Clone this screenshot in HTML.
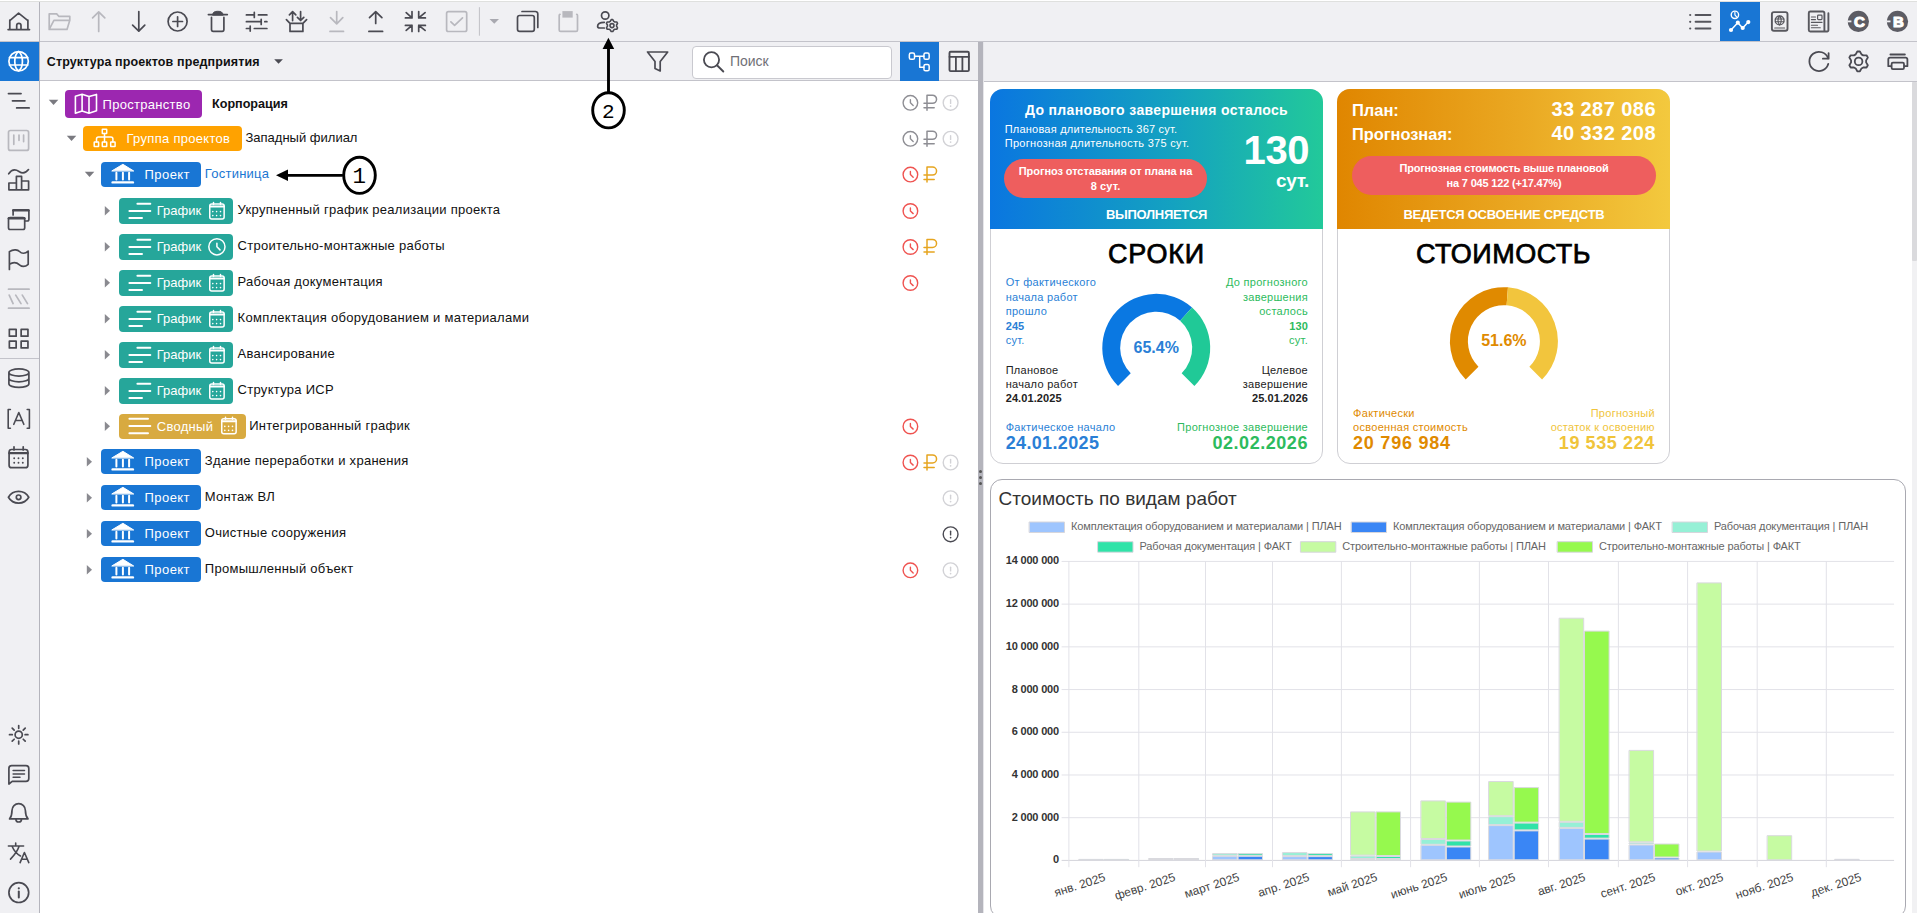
<!DOCTYPE html>
<html><head><meta charset="utf-8"><title>UI</title><style>
html,body{margin:0;padding:0;width:1917px;height:915px;overflow:hidden;background:#fff;font-family:"Liberation Sans",sans-serif;}
.a{position:absolute;display:block}
.t{position:absolute;white-space:nowrap;line-height:1}
.bar{position:absolute;background:#f0f0f3}
.badge{position:absolute;border-radius:4px;color:#fff;font-size:13px}
.bt{position:absolute;white-space:nowrap;line-height:1;top:50%;transform:translateY(-50%)}
</style></head><body>
<div class="a" style="left:0;top:1px;width:1917px;height:1px;background:#dfe0de"></div>
<div class="bar" style="left:0;top:2px;width:1917px;height:39px"></div>
<div class="a" style="left:40px;top:41px;width:1877px;height:1px;background:#c3c3ca"></div>
<div class="bar" style="left:0;top:2px;width:39px;height:911px"></div>
<div class="a" style="left:39px;top:2px;width:1px;height:911px;background:#b4b4bc"></div>
<div class="a" style="left:0;top:42px;width:39px;height:39px;background:#1976d4"></div>
<div class="a" style="left:0;top:41px;width:39px;height:1px;background:#c3c3ca"></div>
<div class="a" style="left:0;top:358px;width:39px;height:1px;background:#c3c3ca"></div>
<div class="bar" style="left:40px;top:42px;width:938px;height:38px"></div>
<div class="a" style="left:40px;top:80px;width:938px;height:1px;background:#c3c3ca"></div>
<div class="bar" style="left:984px;top:42px;width:933px;height:39px"></div>
<div class="a" style="left:984px;top:81px;width:933px;height:1px;background:#c3c3ca"></div>
<div class="a" style="left:978px;top:42px;width:5px;height:871px;background:#b4b4bc"></div>
<div class="a" style="left:983px;top:42px;width:1px;height:871px;background:#e6e6ea"></div>
<div class="a" style="left:979px;top:470px;width:3px;height:3px;border-radius:50%;background:#555"></div>
<div class="a" style="left:979px;top:476px;width:3px;height:3px;border-radius:50%;background:#555"></div>
<div class="a" style="left:979px;top:482px;width:3px;height:3px;border-radius:50%;background:#555"></div>
<div class="a" style="left:1912px;top:82px;width:5px;height:831px;background:#f1f1f3"></div>
<div class="a" style="left:1912px;top:82px;width:5px;height:179px;background:#dadadd;border-radius:1px"></div>
<div class="a" style="left:692px;top:45.5px;width:198px;height:31px;border:1px solid #c9c9cf;border-radius:4px;background:#fff"></div>
<div class="t" style="left:40px;top:0;"></div>
<div class="badge" style="left:65px;top:90px;width:137px;height:28px;background:#9c27b0"></div>
<div class="t" style="left:102.5px;top:97.5px;font-size:13px;letter-spacing:0.3px;color:#fff">Пространство</div>
<div class="t" style="left:212px;top:98px;font-size:12.6px;font-weight:bold;color:#111">Корпорация</div>
<div class="badge" style="left:83px;top:126px;width:159px;height:25px;background:#ffa200"></div>
<div class="t" style="left:126.5px;top:131.5px;font-size:13px;letter-spacing:0.3px;color:#fff">Группа проектов</div>
<div class="t" style="left:245.5px;top:130.5px;font-size:13px;color:#111">Западный филиал</div>
<div class="badge" style="left:101px;top:162px;width:100px;height:25px;background:#1976d4"></div>
<div class="t" style="left:144.5px;top:168px;font-size:13px;letter-spacing:0.45px;color:#fff">Проект</div>
<div class="t" style="left:204.8px;top:166.5px;font-size:13px;letter-spacing:0.25px;color:#1976d2">Гостиница</div>
<div class="badge" style="left:119px;top:198px;width:114px;height:26px;background:#26a69a"></div>
<div class="t" style="left:156.7px;top:203.6px;font-size:13px;color:#fff">График</div>
<div class="t" style="left:237.6px;top:203px;font-size:13px;letter-spacing:0.28px;color:#111">Укрупненный график реализации проекта</div>
<div class="badge" style="left:119px;top:234px;width:114px;height:26px;background:#26a69a"></div>
<div class="t" style="left:156.7px;top:239.6px;font-size:13px;color:#fff">График</div>
<div class="t" style="left:237.6px;top:239px;font-size:13px;letter-spacing:0.28px;color:#111">Строительно-монтажные работы</div>
<div class="badge" style="left:119px;top:270px;width:114px;height:26px;background:#26a69a"></div>
<div class="t" style="left:156.7px;top:275.6px;font-size:13px;color:#fff">График</div>
<div class="t" style="left:237.6px;top:275px;font-size:13px;letter-spacing:0.28px;color:#111">Рабочая документация</div>
<div class="badge" style="left:119px;top:306px;width:114px;height:26px;background:#26a69a"></div>
<div class="t" style="left:156.7px;top:311.6px;font-size:13px;color:#fff">График</div>
<div class="t" style="left:237.6px;top:311px;font-size:13px;letter-spacing:0.28px;color:#111">Комплектация оборудованием и материалами</div>
<div class="badge" style="left:119px;top:342px;width:114px;height:26px;background:#26a69a"></div>
<div class="t" style="left:156.7px;top:347.6px;font-size:13px;color:#fff">График</div>
<div class="t" style="left:237.6px;top:347px;font-size:13px;letter-spacing:0.28px;color:#111">Авансирование</div>
<div class="badge" style="left:119px;top:378px;width:114px;height:26px;background:#26a69a"></div>
<div class="t" style="left:156.7px;top:383.6px;font-size:13px;color:#fff">График</div>
<div class="t" style="left:237.6px;top:383px;font-size:13px;letter-spacing:0.28px;color:#111">Структура ИСР</div>
<div class="badge" style="left:119px;top:414px;width:127px;height:25px;background:#d8aa40"></div>
<div class="t" style="left:156.7px;top:420px;font-size:13px;letter-spacing:0.3px;color:#fff">Сводный</div>
<div class="t" style="left:249.2px;top:419px;font-size:13px;letter-spacing:0.28px;color:#111">Интегрированный график</div>
<div class="badge" style="left:101px;top:449px;width:100px;height:25px;background:#1976d4"></div>
<div class="t" style="left:144.5px;top:454.5px;font-size:13px;letter-spacing:0.45px;color:#fff">Проект</div>
<div class="t" style="left:204.8px;top:453.8px;font-size:13px;letter-spacing:0.28px;color:#111">Здание переработки и хранения</div>
<div class="badge" style="left:101px;top:485px;width:100px;height:25px;background:#1976d4"></div>
<div class="t" style="left:144.5px;top:490.5px;font-size:13px;letter-spacing:0.45px;color:#fff">Проект</div>
<div class="t" style="left:204.8px;top:489.8px;font-size:13px;letter-spacing:0.28px;color:#111">Монтаж ВЛ</div>
<div class="badge" style="left:101px;top:521px;width:100px;height:25px;background:#1976d4"></div>
<div class="t" style="left:144.5px;top:526.5px;font-size:13px;letter-spacing:0.45px;color:#fff">Проект</div>
<div class="t" style="left:204.8px;top:525.8px;font-size:13px;letter-spacing:0.28px;color:#111">Очистные сооружения</div>
<div class="badge" style="left:101px;top:557px;width:100px;height:25px;background:#1976d4"></div>
<div class="t" style="left:144.5px;top:562.5px;font-size:13px;letter-spacing:0.45px;color:#fff">Проект</div>
<div class="t" style="left:204.8px;top:561.8px;font-size:13px;letter-spacing:0.28px;color:#111">Промышленный объект</div>
<div class="a" style="left:990px;top:89px;width:331px;height:373px;border:1px solid #cfcfd4;border-radius:13px;background:#fff"></div>
<div class="a" style="left:990px;top:89px;width:333px;height:140px;border-radius:13px 13px 0 0;background:linear-gradient(90deg,#0a76e0 0%,#14a2c0 55%,#22c99a 100%)"></div>
<div class="t" style="left:1156.50px;top:103.35px;font-size:14px;color:#fff;font-weight:bold;transform:translateX(-50%);letter-spacing:0.35px">До планового завершения осталось</div>
<div class="t" style="left:1004.70px;top:123.99px;font-size:11px;color:#fff;letter-spacing:0.22px">Плановая длительность 367 сут.</div>
<div class="t" style="left:1004.70px;top:138.19px;font-size:11px;color:#fff;letter-spacing:0.3px">Прогнозная длительность 375 сут.</div>
<div class="a" style="left:1004px;top:159px;width:203px;height:39px;border-radius:19.5px;background:#ee5e5e"></div>
<div class="t" style="left:1105.50px;top:166.39px;font-size:11px;color:#fff;font-weight:bold;transform:translateX(-50%);letter-spacing:-0.08px">Прогноз отставания от плана на</div>
<div class="t" style="left:1105.50px;top:181.19px;font-size:11px;color:#fff;font-weight:bold;transform:translateX(-50%);letter-spacing:0.1px">8 сут.</div>
<div class="t" style="left:1309.30px;top:130.04px;font-size:40px;color:#fff;transform:translateX(-100%);font-weight:bold;letter-spacing:-0.3px">130</div>
<div class="t" style="left:1308.80px;top:170.52px;font-size:19px;color:#fff;font-weight:bold;transform:translateX(-100%);letter-spacing:-0.4px">сут.</div>
<div class="t" style="left:1156.50px;top:208.30px;font-size:13px;color:#fff;font-weight:bold;transform:translateX(-50%);letter-spacing:-0.3px">ВЫПОЛНЯЕТСЯ</div>
<div class="t" style="left:1156.50px;top:240.74px;font-size:27px;color:#000;transform:translateX(-50%);letter-spacing:0.75px;-webkit-text-stroke:0.75px #000">СРОКИ</div>
<div class="t" style="left:1005.70px;top:277.29px;font-size:11px;color:#2a7fd6;letter-spacing:0.28px">От фактического</div>
<div class="t" style="left:1308.00px;top:277.29px;font-size:11px;color:#2dbb5d;transform:translateX(-100%);letter-spacing:0.28px">До прогнозного</div>
<div class="t" style="left:1005.70px;top:291.79px;font-size:11px;color:#2a7fd6;letter-spacing:0.28px">начала работ</div>
<div class="t" style="left:1308.00px;top:291.79px;font-size:11px;color:#2dbb5d;transform:translateX(-100%);letter-spacing:0.28px">завершения</div>
<div class="t" style="left:1005.70px;top:306.29px;font-size:11px;color:#2a7fd6;letter-spacing:0.28px">прошло</div>
<div class="t" style="left:1308.00px;top:306.29px;font-size:11px;color:#2dbb5d;transform:translateX(-100%);letter-spacing:0.28px">осталось</div>
<div class="t" style="left:1005.70px;top:320.79px;font-size:11px;color:#2a7fd6;font-weight:bold;letter-spacing:0.1px">245</div>
<div class="t" style="left:1308.00px;top:320.79px;font-size:11px;color:#2dbb5d;font-weight:bold;transform:translateX(-100%);letter-spacing:0.1px">130</div>
<div class="t" style="left:1005.70px;top:335.29px;font-size:11px;color:#2a7fd6;letter-spacing:0.28px">сут.</div>
<div class="t" style="left:1308.00px;top:335.29px;font-size:11px;color:#2dbb5d;transform:translateX(-100%);letter-spacing:0.28px">сут.</div>
<div class="t" style="left:1005.70px;top:364.99px;font-size:11px;color:#222;letter-spacing:0.28px">Плановое</div>
<div class="t" style="left:1005.70px;top:378.89px;font-size:11px;color:#222;letter-spacing:0.28px">начало работ</div>
<div class="t" style="left:1005.70px;top:392.59px;font-size:11px;color:#222;font-weight:bold;letter-spacing:0.1px">24.01.2025</div>
<div class="t" style="left:1308.00px;top:364.99px;font-size:11px;color:#222;transform:translateX(-100%);letter-spacing:0.28px">Целевое</div>
<div class="t" style="left:1308.00px;top:378.89px;font-size:11px;color:#222;transform:translateX(-100%);letter-spacing:0.28px">завершение</div>
<div class="t" style="left:1308.00px;top:392.59px;font-size:11px;color:#222;font-weight:bold;transform:translateX(-100%);letter-spacing:0.1px">25.01.2026</div>
<div class="t" style="left:1005.70px;top:421.99px;font-size:11px;color:#2a7fd6;letter-spacing:0.28px">Фактическое начало</div>
<div class="t" style="left:1005.70px;top:434.36px;font-size:18px;color:#2a7fd6;font-weight:bold;letter-spacing:0.35px">24.01.2025</div>
<div class="t" style="left:1308.00px;top:421.99px;font-size:11px;color:#2dbb5d;transform:translateX(-100%);letter-spacing:0.28px">Прогнозное завершение</div>
<div class="t" style="left:1308.00px;top:434.36px;font-size:18px;color:#2dbb5d;font-weight:bold;transform:translateX(-100%);letter-spacing:0.55px">02.02.2026</div>
<div class="t" style="left:1156.20px;top:339.76px;font-size:16px;color:#2a7fd6;font-weight:bold;transform:translateX(-50%);">65.4%</div>
<div class="a" style="left:1337px;top:89px;width:331px;height:373px;border:1px solid #cfcfd4;border-radius:13px;background:#fff"></div>
<div class="a" style="left:1337px;top:89px;width:333px;height:140px;border-radius:13px 13px 0 0;background:linear-gradient(90deg,#e08600 0%,#eaa822 55%,#f3c93e 100%)"></div>
<div class="t" style="left:1351.90px;top:101.53px;font-size:16.5px;color:#fff;font-weight:bold;">План:</div>
<div class="t" style="left:1656.00px;top:98.77px;font-size:20px;color:#fff;font-weight:bold;transform:translateX(-100%);letter-spacing:0.45px">33 287 086</div>
<div class="t" style="left:1351.90px;top:125.92px;font-size:16.4px;color:#fff;font-weight:bold;">Прогнозная:</div>
<div class="t" style="left:1656.00px;top:122.87px;font-size:20px;color:#fff;font-weight:bold;transform:translateX(-100%);letter-spacing:0.45px">40 332 208</div>
<div class="a" style="left:1352px;top:156px;width:304px;height:39px;border-radius:19.5px;background:#ee5e5e"></div>
<div class="t" style="left:1504.00px;top:162.99px;font-size:11px;color:#fff;font-weight:bold;transform:translateX(-50%);letter-spacing:-0.18px">Прогнозная стоимость выше плановой</div>
<div class="t" style="left:1504.00px;top:178.09px;font-size:11px;color:#fff;font-weight:bold;transform:translateX(-50%);letter-spacing:-0.18px">на 7 045 122 (+17.47%)</div>
<div class="t" style="left:1504.00px;top:208.30px;font-size:13px;color:#fff;font-weight:bold;transform:translateX(-50%);letter-spacing:-0.25px">ВЕДЕТСЯ ОСВОЕНИЕ СРЕДСТВ</div>
<div class="t" style="left:1503.50px;top:240.74px;font-size:27px;color:#000;transform:translateX(-50%);letter-spacing:0.5px;-webkit-text-stroke:0.75px #000">СТОИМОСТЬ</div>
<div class="t" style="left:1503.90px;top:333.26px;font-size:16px;color:#e08a00;font-weight:bold;transform:translateX(-50%);">51.6%</div>
<div class="t" style="left:1353.10px;top:408.49px;font-size:11px;color:#e08a00;letter-spacing:0.28px">Фактически</div>
<div class="t" style="left:1353.10px;top:422.29px;font-size:11px;color:#e08a00;letter-spacing:0.28px">освоенная стоимость</div>
<div class="t" style="left:1353.10px;top:434.36px;font-size:18px;color:#e08a00;font-weight:bold;letter-spacing:0.75px">20 796 984</div>
<div class="t" style="left:1654.90px;top:408.49px;font-size:11px;color:#f0c43a;transform:translateX(-100%);letter-spacing:0.28px">Прогнозный</div>
<div class="t" style="left:1654.90px;top:422.29px;font-size:11px;color:#f0c43a;transform:translateX(-100%);letter-spacing:0.28px">остаток к освоению</div>
<div class="t" style="left:1654.90px;top:434.36px;font-size:18px;color:#f0c43a;font-weight:bold;transform:translateX(-100%);letter-spacing:0.6px">19 535 224</div>
<div class="a" style="left:990px;top:479px;width:914px;height:437px;border:1px solid #a9a9b1;border-radius:12px;background:#fff"></div>
<div class="t" style="left:998.60px;top:488.62px;font-size:19px;color:#333;">Стоимость по видам работ</div>
<div class="t" style="left:1071.00px;top:521.09px;font-size:11px;color:#666;letter-spacing:-0.13px">Комплектация оборудованием и материалами | ПЛАН</div>
<div class="t" style="left:1393.00px;top:521.09px;font-size:11px;color:#666;letter-spacing:-0.13px">Комплектация оборудованием и материалами | ФАКТ</div>
<div class="t" style="left:1714.00px;top:521.09px;font-size:11px;color:#666;letter-spacing:-0.13px">Рабочая документация | ПЛАН</div>
<div class="t" style="left:1139.50px;top:540.79px;font-size:11px;color:#666;letter-spacing:-0.13px">Рабочая документация | ФАКТ</div>
<div class="t" style="left:1342.30px;top:540.79px;font-size:11px;color:#666;letter-spacing:-0.13px">Строительно-монтажные работы | ПЛАН</div>
<div class="t" style="left:1599.00px;top:540.79px;font-size:11px;color:#666;letter-spacing:-0.13px">Строительно-монтажные работы | ФАКТ</div>
<div class="t" style="left:1059.00px;top:854.39px;font-size:11px;color:#333;font-weight:bold;transform:translateX(-100%);letter-spacing:-0.18px">0</div>
<div class="t" style="left:1059.00px;top:811.68px;font-size:11px;color:#333;font-weight:bold;transform:translateX(-100%);letter-spacing:-0.18px">2 000 000</div>
<div class="t" style="left:1059.00px;top:768.97px;font-size:11px;color:#333;font-weight:bold;transform:translateX(-100%);letter-spacing:-0.18px">4 000 000</div>
<div class="t" style="left:1059.00px;top:726.26px;font-size:11px;color:#333;font-weight:bold;transform:translateX(-100%);letter-spacing:-0.18px">6 000 000</div>
<div class="t" style="left:1059.00px;top:683.55px;font-size:11px;color:#333;font-weight:bold;transform:translateX(-100%);letter-spacing:-0.18px">8 000 000</div>
<div class="t" style="left:1059.00px;top:640.84px;font-size:11px;color:#333;font-weight:bold;transform:translateX(-100%);letter-spacing:-0.18px">10 000 000</div>
<div class="t" style="left:1059.00px;top:598.13px;font-size:11px;color:#333;font-weight:bold;transform:translateX(-100%);letter-spacing:-0.18px">12 000 000</div>
<div class="t" style="left:1059.00px;top:555.42px;font-size:11px;color:#333;font-weight:bold;transform:translateX(-100%);letter-spacing:-0.18px">14 000 000</div>
<div class="t" style="left:1102.9px;top:870.5px;font-size:12px;color:#444;transform-origin:100% 0;transform:translateX(-100%) rotate(-18deg)">янв. 2025</div>
<div class="t" style="left:1172.8px;top:870.5px;font-size:12px;color:#444;transform-origin:100% 0;transform:translateX(-100%) rotate(-18deg)">февр. 2025</div>
<div class="t" style="left:1236.7px;top:870.5px;font-size:12px;color:#444;transform-origin:100% 0;transform:translateX(-100%) rotate(-18deg)">март 2025</div>
<div class="t" style="left:1306.6px;top:870.5px;font-size:12px;color:#444;transform-origin:100% 0;transform:translateX(-100%) rotate(-18deg)">апр. 2025</div>
<div class="t" style="left:1374.7px;top:870.5px;font-size:12px;color:#444;transform-origin:100% 0;transform:translateX(-100%) rotate(-18deg)">май 2025</div>
<div class="t" style="left:1445.0px;top:870.5px;font-size:12px;color:#444;transform-origin:100% 0;transform:translateX(-100%) rotate(-18deg)">июнь 2025</div>
<div class="t" style="left:1512.8px;top:870.5px;font-size:12px;color:#444;transform-origin:100% 0;transform:translateX(-100%) rotate(-18deg)">июль 2025</div>
<div class="t" style="left:1583.3px;top:870.5px;font-size:12px;color:#444;transform-origin:100% 0;transform:translateX(-100%) rotate(-18deg)">авг. 2025</div>
<div class="t" style="left:1653.2px;top:870.5px;font-size:12px;color:#444;transform-origin:100% 0;transform:translateX(-100%) rotate(-18deg)">сент. 2025</div>
<div class="t" style="left:1721.1px;top:870.5px;font-size:12px;color:#444;transform-origin:100% 0;transform:translateX(-100%) rotate(-18deg)">окт. 2025</div>
<div class="t" style="left:1791.3px;top:870.5px;font-size:12px;color:#444;transform-origin:100% 0;transform:translateX(-100%) rotate(-18deg)">нояб. 2025</div>
<div class="t" style="left:1858.8px;top:870.5px;font-size:12px;color:#444;transform-origin:100% 0;transform:translateX(-100%) rotate(-18deg)">дек. 2025</div>
<svg class="a" style="left:0;top:0" width="1917" height="915" viewBox="0 0 1917 915" stroke-linecap="round" stroke-linejoin="round">
<path d="M9.8 20.6 L18.6 13.2 L27.9 20.6 M9.8 20 V29.6 M27.9 20 V29.6 M8.1 29.6 H29.5 M16.7 29.6 V25.6 A2.15 2.15 0 0 1 21 25.6 V29.6" stroke="#4a4a52" stroke-width="1.7" fill="none" />
<circle cx="18.6" cy="61.3" r="9.7" stroke="#fff" stroke-width="1.7" fill="none"/>
<path d="M18.6 51.6 C13.5 55 13.5 67.6 18.6 71 C23.7 67.6 23.7 55 18.6 51.6 M9.5 57.6 H27.7 M9.5 65 H27.7" stroke="#fff" stroke-width="1.7" fill="none" />
<path d="M8.5 93.6 H21 M12.5 100.8 H24.9 M16.7 107.9 H29.1" stroke="#4a4a52" stroke-width="1.8" fill="none" />
<rect x="8.5" y="130.5" width="20.1" height="19.9" rx="2" stroke="#b8b8be" stroke-width="1.7" fill="none"/>
<path d="M13.8 135.1 V144.3 M19 135.1 V140.3 M23.6 135.1 V141.6" stroke="#b8b8be" stroke-width="1.7" fill="none" />
<path d="M8.7 173.8 C12 169 16 169.5 19 171.5 C22 173.5 25.5 173.5 28.5 169.6" stroke="#4a4a52" stroke-width="1.7" fill="none" />
<path d="M8.9 189.8 V183 H16.4 V176.4 H21.6 V181 H28.6 V189.8 Z M16.4 183 V189.8 M21.6 181 V189.8" stroke="#4a4a52" stroke-width="1.7" fill="none" />
<path d="M13.1 215 V211.5 A1.7 1.7 0 0 1 14.8 209.8 H27.2 A1.7 1.7 0 0 1 28.9 211.5 V219.3 A1.7 1.7 0 0 1 27.2 221 H24.7" stroke="#4a4a52" stroke-width="1.7" fill="none" />
<path d="M13.3 210.3 H28.5" stroke="#4a4a52" stroke-width="2.6" fill="none" />
<rect x="8.5" y="217.7" width="16.2" height="11.8" rx="1.7" stroke="#4a4a52" stroke-width="1.7" fill="none"/>
<path d="M8.9 218.3 H24.3" stroke="#4a4a52" stroke-width="2.6" fill="none" />
<path d="M9.4 269.5 V251.6 C14 248.5 18 250 19.5 251.5 C21.5 253.5 25 254 28.2 251.1 V264.3 C25 267.2 21.5 266.5 19.5 264.8 C17.5 263 13.5 261.5 9.4 264.3" stroke="#4a4a52" stroke-width="1.7" fill="none" />
<path d="M8.5 289.2 H29.1 M8.5 308.2 H29.1 M9.2 295.1 L13.1 303.6 M15.7 295.1 L21 303.6 M22.3 295.1 L27.5 303.6" stroke="#b8b8be" stroke-width="1.7" fill="none" />
<rect x="9.35" y="329.35" width="6.8" height="6.8" rx="0" stroke="#4a4a52" stroke-width="1.7" fill="none"/>
<rect x="21.150000000000002" y="329.35" width="6.8" height="6.8" rx="0" stroke="#4a4a52" stroke-width="1.7" fill="none"/>
<rect x="9.35" y="341.15000000000003" width="6.8" height="6.8" rx="0" stroke="#4a4a52" stroke-width="1.7" fill="none"/>
<rect x="21.150000000000002" y="341.15000000000003" width="6.8" height="6.8" rx="0" stroke="#4a4a52" stroke-width="1.7" fill="none"/>
<path d="M8.9 372.5 A10 3.6 0 0 0 28.9 372.5 A10 3.6 0 0 0 8.9 372.5 V383.8 A10 3.6 0 0 0 28.9 383.8 V372.5 M8.9 378.2 A10 3.6 0 0 0 28.9 378.2" stroke="#4a4a52" stroke-width="1.7" fill="none" />
<path d="M10.4 409.5 H8.2 V428.2 H10.4 M27.2 409.5 H29.4 V428.2 H27.2 M13.8 424.3 L18.8 412.5 L23.8 424.3 M15.3 420.5 H22.3" stroke="#4a4a52" stroke-width="1.6" fill="none" />
<rect x="9.1" y="449.5" width="18.8" height="18.2" rx="2.5" stroke="#4a4a52" stroke-width="1.7" fill="none"/>
<path d="M9.3 453.2 H27.7" stroke="#4a4a52" stroke-width="2.2" fill="none" />
<path d="M14 446.8 V450 M23.2 446.8 V450" stroke="#4a4a52" stroke-width="1.7" fill="none" />
<circle cx="14.2" cy="458.2" r="0.95" fill="#4a4a52"/>
<circle cx="18.5" cy="458.2" r="0.95" fill="#4a4a52"/>
<circle cx="22.8" cy="458.2" r="0.95" fill="#4a4a52"/>
<circle cx="14.2" cy="462.8" r="0.95" fill="#4a4a52"/>
<circle cx="18.5" cy="462.8" r="0.95" fill="#4a4a52"/>
<circle cx="22.8" cy="462.8" r="0.95" fill="#4a4a52"/>
<path d="M8.4 497.3 C13 489.5 24.2 489.5 28.8 497.3 C24.2 505.1 13 505.1 8.4 497.3 Z" stroke="#4a4a52" stroke-width="1.7" fill="none" />
<circle cx="18.6" cy="497.3" r="2.3" stroke="#4a4a52" stroke-width="1.7" fill="none"/>
<circle cx="18.7" cy="734.7" r="3.6" stroke="#4a4a52" stroke-width="1.7" fill="none"/>
<path d="M25.10 734.70 L27.90 734.70 M23.23 739.23 L25.21 741.21 M18.70 741.10 L18.70 743.90 M14.17 739.23 L12.19 741.21 M12.30 734.70 L9.50 734.70 M14.17 730.17 L12.19 728.19 M18.70 728.30 L18.70 725.50 M23.23 730.17 L25.21 728.19 " stroke="#4a4a52" stroke-width="1.7" fill="none" />
<path d="M8.9 784 V768.5 A2.8 2.8 0 0 1 11.7 765.7 H26 A2.8 2.8 0 0 1 28.8 768.5 V778.6 A2.8 2.8 0 0 1 26 781.4 H12.2 Z" stroke="#4a4a52" stroke-width="1.7" fill="none" />
<path d="M13.1 770.5 H24.5 M13.1 774 H24.5 M13.1 777.3 H20" stroke="#4a4a52" stroke-width="1.5" fill="none" />
<path d="M9.6 818.9 C11.5 816.5 12 813 12 810.5 C12 806.5 15 803.7 18.7 803.7 C22.4 803.7 25.4 806.5 25.4 810.5 C25.4 813 26 816.5 28 818.9 Z M15.9 819.2 A2.8 2.8 0 0 0 21.5 819.2" stroke="#4a4a52" stroke-width="1.7" fill="none" />
<path d="M8.4 846 H23.6 M15.7 843 V846 M12.2 846.5 C14 851 17 854 20.5 856 M19 846.5 C17.5 851 14 855.5 10.5 859.1 M20.1 862.6 L24.4 852.5 L28.8 862.6 M21.6 859.2 H27.2" stroke="#4a4a52" stroke-width="1.6" fill="none" />
<circle cx="18.8" cy="892.6" r="9.9" stroke="#4a4a52" stroke-width="1.7" fill="none"/>
<path d="M18.8 891.5 V897.5" stroke="#4a4a52" stroke-width="2.0" fill="none" />
<circle cx="18.8" cy="888.3" r="1.1" fill="#4a4a52"/>
<path d="M49.2 29.4 V13.9 H56.7 L58.7 16.3 H69.8 V20.3 M49.2 29.4 L53.9 20.3 H69.8 L67 29.4 Z" stroke="#b8b8be" stroke-width="1.7" fill="none" />
<path d="M98.7 31.4 V11.8 M92.6 17.9 L98.7 11.8 L104.8 17.9" stroke="#b8b8be" stroke-width="1.7" fill="none" />
<path d="M138.8 11.6 V31.2 M132.6 25.2 L138.8 31.2 L144.8 25.2" stroke="#4a4a52" stroke-width="1.7" fill="none" />
<circle cx="177.6" cy="21.5" r="9.5" stroke="#4a4a52" stroke-width="1.7" fill="none"/>
<path d="M172.9 21.5 H182.5 M177.6 16.8 V26.5" stroke="#4a4a52" stroke-width="1.7" fill="none" />
<path d="M208.4 14.6 H227.3 M211.5 17.4 V29.6 A1.7 1.7 0 0 0 213.2 31.3 H222.2 A1.7 1.7 0 0 0 223.9 29.6 V17.4" stroke="#4a4a52" stroke-width="1.7" fill="none" />
<path d="M212.6 14.8 C213 12 214.5 11.3 217.8 11.3 C221 11.3 222.6 12 223.1 14.8 Z" stroke="#4a4a52" stroke-width="1.0" fill="#4a4a52" />
<path d="M246.4 14.9 H254.3 M254.3 12.4 V17.4 M258.4 14.9 H266.9 M246.4 21.7 H261.2 M261.2 19.4 V24.4 M264.8 21.7 H266.9 M246.4 28.5 H250.2 M250.2 26.2 V31.1 M254.3 28.5 H266.9" stroke="#4a4a52" stroke-width="1.7" fill="none" />
<path d="M290 23.4 H302.9 V31.4 H290 Z M290 23.4 L286.4 19.7 M302.9 23.4 L306.6 19.7 M292.6 20.6 V11.7 M289.4 14.8 L292.6 11.6 L295.8 14.8 M300.6 11.6 V20.4 M297.4 17.3 L300.6 20.5 L303.8 17.3" stroke="#4a4a52" stroke-width="1.7" fill="none" />
<path d="M336.7 11.6 V23.6 M330.5 17.7 L336.7 23.8 L342.8 17.7 M330 31.4 H343.5" stroke="#b8b8be" stroke-width="1.7" fill="none" />
<path d="M375.7 23.4 V11.8 M369.5 17.7 L375.7 11.6 L381.9 17.7 M368.9 31.4 H382.6" stroke="#4a4a52" stroke-width="1.7" fill="none" />
<path d="M406.2 12.6 L412 17.9 M412 11.6 V17.9 H405.4 M425.1 12.6 L418.7 17.9 M418.7 11.6 V17.9 H425.4 M406.2 30.4 L412 25.4 M412 31.4 V25.4 H405.4 M425.1 30.4 L418.7 25.4 M418.7 31.4 V25.4 H425.4" stroke="#4a4a52" stroke-width="1.7" fill="none" />
<rect x="446.6" y="11.6" width="20.1" height="19.9" rx="1.8" stroke="#b8b8be" stroke-width="1.7" fill="none"/>
<path d="M450.9 21.9 L454.6 25.4 L462.5 17.9" stroke="#b8b8be" stroke-width="1.7" fill="none" />
<rect x="478.9" y="7.2" width="1" height="28.5" fill="#c0c0c6"/>
<path d="M489.5 18.9 H499 L494.25 23.8 Z" fill="#a9a9b0"/>
<rect x="517.5" y="15.5" width="16.8" height="15.9" rx="2.2" stroke="#4a4a52" stroke-width="1.7" fill="none"/>
<path d="M522 11.5 H535.3 A2.4 2.4 0 0 1 537.8 13.9 V27.4" stroke="#4a4a52" stroke-width="1.7" fill="none" />
<path d="M560 14.3 A1.4 1.4 0 0 0 559.2 15.6 V30 A1.4 1.4 0 0 0 560.6 31.4 H576.1 A1.4 1.4 0 0 0 577.5 30 V15.6 A1.4 1.4 0 0 0 576.7 14.3" stroke="#b8b8be" stroke-width="1.7" fill="none" />
<rect x="562.4" y="11.1" width="10.3" height="6.5" fill="#b8b8be"/>
<circle cx="605.2" cy="15.5" r="3.7" stroke="#4a4a52" stroke-width="1.7" fill="none"/>
<path d="M604.3 22.3 C601 22.3 597.6 23.5 597.6 26.2 C597.6 27.6 598.5 28 600 28 H604.3" stroke="#4a4a52" stroke-width="1.7" fill="none" />
<path d="M611.22 19.65 L612.78 19.65 L613.76 21.35 L614.80 21.95 L616.76 21.95 L617.54 23.30 L616.56 25.00 L616.56 26.20 L617.54 27.90 L616.76 29.25 L614.80 29.25 L613.76 29.85 L612.78 31.55 L611.22 31.55 L610.24 29.85 L609.20 29.25 L607.24 29.25 L606.46 27.90 L607.44 26.20 L607.44 25.00 L606.46 23.30 L607.24 21.95 L609.20 21.95 L610.24 21.35Z" stroke="#4a4a52" stroke-width="1.6" fill="none" stroke-linejoin="round"/>
<circle cx="612" cy="25.6" r="2.0" stroke="#4a4a52" stroke-width="1.6" fill="none"/>
<rect x="1720" y="2" width="40" height="39" fill="#1976d4"/>
<circle cx="1690.2" cy="15" r="1.1" fill="#55555c"/>
<circle cx="1690.2" cy="21.8" r="1.1" fill="#55555c"/>
<circle cx="1690.2" cy="28.5" r="1.1" fill="#55555c"/>
<path d="M1695.6 15 H1710.4 M1695.6 21.8 H1710.4 M1695.6 28.5 H1710.4" stroke="#55555c" stroke-width="2.0" fill="none" />
<circle cx="1734.9" cy="14.8" r="3.7" stroke="#fff" stroke-width="1.4" fill="none"/>
<path d="M1734.9 12.3 V14.8 L1736.6 16.8" stroke="#fff" stroke-width="1.2" fill="none" />
<path d="M1731 30 L1737.8 22.7 L1742.7 28 L1748.3 22.1" stroke="#fff" stroke-width="1.5" fill="none" />
<circle cx="1731" cy="30" r="2.1" fill="#fff"/>
<circle cx="1737.8" cy="22.7" r="2.1" fill="#fff"/>
<circle cx="1742.7" cy="28" r="2.1" fill="#fff"/>
<circle cx="1748.3" cy="22.1" r="2.1" fill="#fff"/>
<rect x="1771.9" y="12.1" width="15.6" height="18.6" rx="2" stroke="#58585e" stroke-width="1.9" fill="none"/>
<circle cx="1779.6" cy="20.4" r="4.4" stroke="#58585e" stroke-width="1.3" fill="none"/>
<path d="M1779.6 16 C1777.5 18 1777.5 22.8 1779.6 24.8 C1781.7 22.8 1781.7 18 1779.6 16 M1775.2 19 H1784 M1775.2 21.8 H1784 M1774.7 28 H1784.6" stroke="#58585e" stroke-width="1.1" fill="none" />
<path d="M1828.4 13.2 V30.3 A1.2 1.2 0 0 1 1827.2 31.5 H1810.3 A1.5 1.5 0 0 1 1808.8 30 V13 A1.5 1.5 0 0 1 1810.3 11.5 H1822.9 A1.5 1.5 0 0 1 1824.4 13 V31.3" stroke="#58585e" stroke-width="1.9" fill="none" />
<path d="M1811.4 17 H1815.5 M1811.4 19.6 H1815.5 M1811.4 22.4 H1822 M1811.4 25.2 H1817.5 M1811.4 27.8 H1820.3" stroke="#58585e" stroke-width="1.1" fill="none" />
<rect x="1817.6" y="15.2" width="4.4" height="4.4" rx="0.8" stroke="#58585e" stroke-width="1.2" fill="none"/>
<circle cx="1858.4" cy="21.4" r="10.6" fill="#5c5c64"/>
<rect x="1847.4" y="20.5" width="4" height="1.8" fill="#f0f0f3"/>
<text x="1859.3000000000002" y="26.8" text-anchor="middle" font-family="Liberation Sans" font-weight="bold" font-size="15" fill="#fff" stroke="#fff" stroke-width="1.1" stroke-linejoin="round">C</text>
<circle cx="1897.5" cy="21.4" r="10.6" fill="#5c5c64"/>
<rect x="1886.5" y="20.5" width="4" height="1.8" fill="#f0f0f3"/>
<text x="1898.4" y="26.8" text-anchor="middle" font-family="Liberation Sans" font-weight="bold" font-size="15" fill="#fff" stroke="#fff" stroke-width="1.1" stroke-linejoin="round">B</text>
<path d="M274.2 59.3 H282.9 L278.55 63.8 Z" fill="#4a4a52"/>
<path d="M647.5 52 H667.7 L660.2 61.5 V71 L655 68.5 V61.5 Z" stroke="#4a4a52" stroke-width="1.7" fill="none" />
<circle cx="711.5" cy="59.8" r="7.6" stroke="#4a4a52" stroke-width="1.8" fill="none"/>
<path d="M717 65.3 L723.3 71.5" stroke="#4a4a52" stroke-width="1.9" fill="none" />
<rect x="900" y="42" width="39" height="39" fill="#1976d4"/>
<rect x="909.35" y="53.05" width="5.2" height="6.3" rx="1.6" stroke="#fff" stroke-width="1.5" fill="none"/>
<rect x="923.95" y="53.05" width="5.2" height="6.3" rx="1.6" stroke="#fff" stroke-width="1.5" fill="none"/>
<rect x="923.95" y="64.45" width="5.2" height="6.4" rx="1.6" stroke="#fff" stroke-width="1.5" fill="none"/>
<path d="M914.6 56.2 H923.9 M919.7 56.2 V67.2 H923.9" stroke="#fff" stroke-width="1.5" fill="none" />
<rect x="949.5" y="51.7" width="19.4" height="19.4" rx="1.2" stroke="#4a4a52" stroke-width="1.9" fill="none"/>
<path d="M949.5 56.8 H968.9 M955.9 56.8 V71 M962.4 56.8 V71" stroke="#4a4a52" stroke-width="1.8" fill="none" />
<path d="M1828.3 63.8 A9.6 9.6 0 1 1 1828.1 58.4" stroke="#4a4a52" stroke-width="1.8" fill="none" />
<path d="M1828.6 53.2 V58.7 H1822.9" stroke="#4a4a52" stroke-width="1.8" fill="none" />
<path d="M1857.29 51.49 L1859.91 51.49 L1861.51 54.38 L1863.23 55.37 L1866.53 55.31 L1867.84 57.57 L1866.13 60.41 L1866.13 62.39 L1867.84 65.23 L1866.53 67.49 L1863.23 67.43 L1861.51 68.42 L1859.91 71.31 L1857.29 71.31 L1855.69 68.42 L1853.97 67.43 L1850.67 67.49 L1849.36 65.23 L1851.07 62.39 L1851.07 60.41 L1849.36 57.57 L1850.67 55.31 L1853.97 55.37 L1855.69 54.38Z" stroke="#4a4a52" stroke-width="1.8" fill="none" stroke-linejoin="round"/>
<circle cx="1858.6" cy="61.4" r="3.8" stroke="#4a4a52" stroke-width="1.8" fill="none"/>
<path d="M1890.4 54.5 H1904.9" stroke="#4a4a52" stroke-width="1.8" fill="none" />
<path d="M1890.8 66.2 H1888.3 V59.5 A1.8 1.8 0 0 1 1890.1 57.7 H1905.6 A1.8 1.8 0 0 1 1907.4 59.5 V66.2 H1904.6" stroke="#4a4a52" stroke-width="1.8" fill="none" />
<rect x="1891.6" y="62.7" width="12.4" height="6.4" rx="1.3" stroke="#4a4a52" stroke-width="1.8" fill="none"/>
<path d="M48.8 99.8 H58.3 L53.55 105.1 Z" fill="#7a7a80"/>
<path d="M75.4 96.3 L82.1 94.3 L89 96.6 L96.5 94.4 V110.8 L89 113.2 L82.1 111 L75.4 113.2 Z M82.1 94.3 V111 M89 96.6 V113.2" stroke="#fff" stroke-width="1.6" fill="none" />
<path d="M66.8 135.7 H76.3 L71.55 141.0 Z" fill="#7a7a80"/>
<rect x="102.3" y="129.2" width="4.4" height="4.4" rx="0.3" stroke="#fff" stroke-width="1.5" fill="none"/><path d="M104.5 133.6 V137 M96.5 142 V139 A2 2 0 0 1 98.5 137 H110.9 A2 2 0 0 1 112.9 139 V142 M104.5 137 V142" stroke="#fff" stroke-width="1.5" fill="none" /><rect x="94.2" y="142.1" width="4.4" height="4.4" rx="0.3" stroke="#fff" stroke-width="1.5" fill="none"/><rect x="102.3" y="142.1" width="4.4" height="4.4" rx="0.3" stroke="#fff" stroke-width="1.5" fill="none"/><rect x="110.7" y="142.1" width="4.4" height="4.4" rx="0.3" stroke="#fff" stroke-width="1.5" fill="none"/>
<path d="M84.8 171.7 H94.3 L89.55 177.0 Z" fill="#7a7a80"/>
<path d="M112.1 170.8 L122.9 164.3 L133.4 170.8 Z" fill="#fff" stroke="#fff" stroke-width="1" stroke-linejoin="round"/><path d="M116.4 172.8 V179.4 M122.9 172.8 V179.4 M129.1 172.8 V179.4" stroke="#fff" stroke-width="2.0" fill="none" /><path d="M112.6 182.4 H132.9" stroke="#fff" stroke-width="2.4" fill="none" />
<path d="M104.8 206 V215.5 L110.0 210.75 Z" fill="#8a8a90"/>
<path d="M137.4 203.7 H150.3 M129.4 210.9 H150.3 M129.4 218.1 H142.0" stroke="#fff" stroke-width="2.0" fill="none" />
<rect x="209.75" y="204.05" width="14.4" height="14.9" rx="2.0" stroke="#fff" stroke-width="1.5" fill="none"/><path d="M210 206.4 H224" stroke="#fff" stroke-width="2.0" fill="none" /><path d="M213.5 202.4 V204.4 M220.5 202.4 V204.4" stroke="#fff" stroke-width="1.5" fill="none" /><circle cx="212.8" cy="211.6" r="0.8" fill="#fff"/><circle cx="216.6" cy="211.6" r="0.8" fill="#fff"/><circle cx="220.5" cy="211.6" r="0.8" fill="#fff"/><circle cx="212.8" cy="215.6" r="0.8" fill="#fff"/><circle cx="216.6" cy="215.6" r="0.8" fill="#fff"/><circle cx="220.5" cy="215.6" r="0.8" fill="#fff"/>
<path d="M104.8 242 V251.5 L110.0 246.75 Z" fill="#8a8a90"/>
<path d="M137.4 239.7 H150.3 M129.4 246.9 H150.3 M129.4 254.1 H142.0" stroke="#fff" stroke-width="2.0" fill="none" />
<circle cx="216.9" cy="246.8" r="8.1" stroke="#fff" stroke-width="1.5" fill="none"/><path d="M216.9 243.3 V246.8 L220 249.9" stroke="#fff" stroke-width="1.5" fill="none" />
<path d="M104.8 278 V287.5 L110.0 282.75 Z" fill="#8a8a90"/>
<path d="M137.4 275.7 H150.3 M129.4 282.9 H150.3 M129.4 290.1 H142.0" stroke="#fff" stroke-width="2.0" fill="none" />
<rect x="209.75" y="276.05" width="14.4" height="14.9" rx="2.0" stroke="#fff" stroke-width="1.5" fill="none"/><path d="M210 278.4 H224" stroke="#fff" stroke-width="2.0" fill="none" /><path d="M213.5 274.4 V276.4 M220.5 274.4 V276.4" stroke="#fff" stroke-width="1.5" fill="none" /><circle cx="212.8" cy="283.6" r="0.8" fill="#fff"/><circle cx="216.6" cy="283.6" r="0.8" fill="#fff"/><circle cx="220.5" cy="283.6" r="0.8" fill="#fff"/><circle cx="212.8" cy="287.6" r="0.8" fill="#fff"/><circle cx="216.6" cy="287.6" r="0.8" fill="#fff"/><circle cx="220.5" cy="287.6" r="0.8" fill="#fff"/>
<path d="M104.8 314 V323.5 L110.0 318.75 Z" fill="#8a8a90"/>
<path d="M137.4 311.7 H150.3 M129.4 318.9 H150.3 M129.4 326.1 H142.0" stroke="#fff" stroke-width="2.0" fill="none" />
<rect x="209.75" y="312.05" width="14.4" height="14.9" rx="2.0" stroke="#fff" stroke-width="1.5" fill="none"/><path d="M210 314.4 H224" stroke="#fff" stroke-width="2.0" fill="none" /><path d="M213.5 310.4 V312.4 M220.5 310.4 V312.4" stroke="#fff" stroke-width="1.5" fill="none" /><circle cx="212.8" cy="319.6" r="0.8" fill="#fff"/><circle cx="216.6" cy="319.6" r="0.8" fill="#fff"/><circle cx="220.5" cy="319.6" r="0.8" fill="#fff"/><circle cx="212.8" cy="323.6" r="0.8" fill="#fff"/><circle cx="216.6" cy="323.6" r="0.8" fill="#fff"/><circle cx="220.5" cy="323.6" r="0.8" fill="#fff"/>
<path d="M104.8 350 V359.5 L110.0 354.75 Z" fill="#8a8a90"/>
<path d="M137.4 347.7 H150.3 M129.4 354.9 H150.3 M129.4 362.1 H142.0" stroke="#fff" stroke-width="2.0" fill="none" />
<rect x="209.75" y="348.05" width="14.4" height="14.9" rx="2.0" stroke="#fff" stroke-width="1.5" fill="none"/><path d="M210 350.4 H224" stroke="#fff" stroke-width="2.0" fill="none" /><path d="M213.5 346.4 V348.4 M220.5 346.4 V348.4" stroke="#fff" stroke-width="1.5" fill="none" /><circle cx="212.8" cy="355.6" r="0.8" fill="#fff"/><circle cx="216.6" cy="355.6" r="0.8" fill="#fff"/><circle cx="220.5" cy="355.6" r="0.8" fill="#fff"/><circle cx="212.8" cy="359.6" r="0.8" fill="#fff"/><circle cx="216.6" cy="359.6" r="0.8" fill="#fff"/><circle cx="220.5" cy="359.6" r="0.8" fill="#fff"/>
<path d="M104.8 386 V395.5 L110.0 390.75 Z" fill="#8a8a90"/>
<path d="M137.4 383.7 H150.3 M129.4 390.9 H150.3 M129.4 398.1 H142.0" stroke="#fff" stroke-width="2.0" fill="none" />
<rect x="209.75" y="384.05" width="14.4" height="14.9" rx="2.0" stroke="#fff" stroke-width="1.5" fill="none"/><path d="M210 386.4 H224" stroke="#fff" stroke-width="2.0" fill="none" /><path d="M213.5 382.4 V384.4 M220.5 382.4 V384.4" stroke="#fff" stroke-width="1.5" fill="none" /><circle cx="212.8" cy="391.6" r="0.8" fill="#fff"/><circle cx="216.6" cy="391.6" r="0.8" fill="#fff"/><circle cx="220.5" cy="391.6" r="0.8" fill="#fff"/><circle cx="212.8" cy="395.6" r="0.8" fill="#fff"/><circle cx="216.6" cy="395.6" r="0.8" fill="#fff"/><circle cx="220.5" cy="395.6" r="0.8" fill="#fff"/>
<path d="M104.8 421.5 V431.0 L110.0 426.25 Z" fill="#8a8a90"/>
<path d="M129.4 418.8 H148 M129.4 426 H150.3 M129.4 433.2 H148" stroke="#fff" stroke-width="2.0" fill="none" />
<rect x="221.75" y="418.85" width="14.4" height="14.9" rx="2.0" stroke="#fff" stroke-width="1.5" fill="none"/><path d="M222 421.20000000000005 H236" stroke="#fff" stroke-width="2.0" fill="none" /><path d="M225.5 417.20000000000005 V419.20000000000005 M232.5 417.20000000000005 V419.20000000000005" stroke="#fff" stroke-width="1.5" fill="none" /><circle cx="224.8" cy="426.4" r="0.8" fill="#fff"/><circle cx="228.6" cy="426.4" r="0.8" fill="#fff"/><circle cx="232.5" cy="426.4" r="0.8" fill="#fff"/><circle cx="224.8" cy="430.4" r="0.8" fill="#fff"/><circle cx="228.6" cy="430.4" r="0.8" fill="#fff"/><circle cx="232.5" cy="430.4" r="0.8" fill="#fff"/>
<path d="M86.8 457 V466.5 L92.0 461.75 Z" fill="#8a8a90"/>
<path d="M112.1 457.8 L122.9 451.3 L133.4 457.8 Z" fill="#fff" stroke="#fff" stroke-width="1" stroke-linejoin="round"/><path d="M116.4 459.8 V466.4 M122.9 459.8 V466.4 M129.1 459.8 V466.4" stroke="#fff" stroke-width="2.0" fill="none" /><path d="M112.6 469.4 H132.9" stroke="#fff" stroke-width="2.4" fill="none" />
<path d="M86.8 493 V502.5 L92.0 497.75 Z" fill="#8a8a90"/>
<path d="M112.1 493.8 L122.9 487.3 L133.4 493.8 Z" fill="#fff" stroke="#fff" stroke-width="1" stroke-linejoin="round"/><path d="M116.4 495.8 V502.4 M122.9 495.8 V502.4 M129.1 495.8 V502.4" stroke="#fff" stroke-width="2.0" fill="none" /><path d="M112.6 505.4 H132.9" stroke="#fff" stroke-width="2.4" fill="none" />
<path d="M86.8 529 V538.5 L92.0 533.75 Z" fill="#8a8a90"/>
<path d="M112.1 529.8 L122.9 523.3 L133.4 529.8 Z" fill="#fff" stroke="#fff" stroke-width="1" stroke-linejoin="round"/><path d="M116.4 531.8 V538.4 M122.9 531.8 V538.4 M129.1 531.8 V538.4" stroke="#fff" stroke-width="2.0" fill="none" /><path d="M112.6 541.4 H132.9" stroke="#fff" stroke-width="2.4" fill="none" />
<path d="M86.8 565 V574.5 L92.0 569.75 Z" fill="#8a8a90"/>
<path d="M112.1 565.8 L122.9 559.3 L133.4 565.8 Z" fill="#fff" stroke="#fff" stroke-width="1" stroke-linejoin="round"/><path d="M116.4 567.8 V574.4 M122.9 567.8 V574.4 M129.1 567.8 V574.4" stroke="#fff" stroke-width="2.0" fill="none" /><path d="M112.6 577.4 H132.9" stroke="#fff" stroke-width="2.4" fill="none" />
<circle cx="910.4" cy="102.8" r="7.3" stroke="#8e8e94" stroke-width="1.4" fill="none"/><path d="M910.4 99.734 V102.8 L913.174 105.428" stroke="#8e8e94" stroke-width="1.4" fill="none" />
<path d="M927 110.2 V95.2 H932.5 A4 4 0 0 1 932.5 103.3 H924 M924 107.7 H934.2" stroke="#8e8e94" stroke-width="1.5" fill="none" />
<circle cx="950.6" cy="102.8" r="7.4" stroke="#d2d2d6" stroke-width="1.4" fill="none"/><path d="M950.6 99.8 V103.39999999999999" stroke="#d2d2d6" stroke-width="1.4" fill="none" /><circle cx="950.6" cy="106.1" r="0.85" fill="#d2d2d6"/>
<circle cx="910.4" cy="138.8" r="7.3" stroke="#8e8e94" stroke-width="1.4" fill="none"/><path d="M910.4 135.734 V138.8 L913.174 141.428" stroke="#8e8e94" stroke-width="1.4" fill="none" />
<path d="M927 146.20000000000002 V131.20000000000002 H932.5 A4 4 0 0 1 932.5 139.3 H924 M924 143.70000000000002 H934.2" stroke="#8e8e94" stroke-width="1.5" fill="none" />
<circle cx="950.6" cy="138.8" r="7.4" stroke="#d2d2d6" stroke-width="1.4" fill="none"/><path d="M950.6 135.8 V139.4" stroke="#d2d2d6" stroke-width="1.4" fill="none" /><circle cx="950.6" cy="142.10000000000002" r="0.85" fill="#d2d2d6"/>
<circle cx="910.4" cy="174.6" r="7.3" stroke="#ef5350" stroke-width="1.4" fill="none"/><path d="M910.4 171.534 V174.6 L913.174 177.22799999999998" stroke="#ef5350" stroke-width="1.4" fill="none" />
<path d="M927 182.0 V167.0 H932.5 A4 4 0 0 1 932.5 175.1 H924 M924 179.5 H934.2" stroke="#e6a520" stroke-width="1.5" fill="none" />
<circle cx="910.4" cy="211" r="7.3" stroke="#ef5350" stroke-width="1.4" fill="none"/><path d="M910.4 207.934 V211 L913.174 213.628" stroke="#ef5350" stroke-width="1.4" fill="none" />
<circle cx="910.4" cy="247" r="7.3" stroke="#ef5350" stroke-width="1.4" fill="none"/><path d="M910.4 243.934 V247 L913.174 249.628" stroke="#ef5350" stroke-width="1.4" fill="none" />
<path d="M927 254.4 V239.4 H932.5 A4 4 0 0 1 932.5 247.5 H924 M924 251.9 H934.2" stroke="#e6a520" stroke-width="1.5" fill="none" />
<circle cx="910.4" cy="283" r="7.3" stroke="#ef5350" stroke-width="1.4" fill="none"/><path d="M910.4 279.934 V283 L913.174 285.628" stroke="#ef5350" stroke-width="1.4" fill="none" />
<circle cx="910.4" cy="426.5" r="7.3" stroke="#ef5350" stroke-width="1.4" fill="none"/><path d="M910.4 423.434 V426.5 L913.174 429.128" stroke="#ef5350" stroke-width="1.4" fill="none" />
<circle cx="910.4" cy="462.5" r="7.3" stroke="#ef5350" stroke-width="1.4" fill="none"/><path d="M910.4 459.434 V462.5 L913.174 465.128" stroke="#ef5350" stroke-width="1.4" fill="none" />
<path d="M927 469.9 V454.9 H932.5 A4 4 0 0 1 932.5 463.0 H924 M924 467.4 H934.2" stroke="#e6a520" stroke-width="1.5" fill="none" />
<circle cx="950.6" cy="462.5" r="7.4" stroke="#d2d2d6" stroke-width="1.4" fill="none"/><path d="M950.6 459.5 V463.1" stroke="#d2d2d6" stroke-width="1.4" fill="none" /><circle cx="950.6" cy="465.8" r="0.85" fill="#d2d2d6"/>
<circle cx="950.6" cy="498.3" r="7.4" stroke="#d2d2d6" stroke-width="1.4" fill="none"/><path d="M950.6 495.3 V498.90000000000003" stroke="#d2d2d6" stroke-width="1.4" fill="none" /><circle cx="950.6" cy="501.6" r="0.85" fill="#d2d2d6"/>
<circle cx="950.6" cy="534.3" r="7.4" stroke="#4a4a52" stroke-width="1.4" fill="none"/><path d="M950.6 531.3 V534.9" stroke="#4a4a52" stroke-width="1.4" fill="none" /><circle cx="950.6" cy="537.5999999999999" r="0.85" fill="#4a4a52"/>
<circle cx="910.4" cy="570.3" r="7.3" stroke="#ef5350" stroke-width="1.4" fill="none"/><path d="M910.4 567.2339999999999 V570.3 L913.174 572.928" stroke="#ef5350" stroke-width="1.4" fill="none" />
<circle cx="950.6" cy="570.3" r="7.4" stroke="#d2d2d6" stroke-width="1.4" fill="none"/><path d="M950.6 567.3 V570.9" stroke="#d2d2d6" stroke-width="1.4" fill="none" /><circle cx="950.6" cy="573.5999999999999" r="0.85" fill="#d2d2d6"/>
<ellipse cx="359.5" cy="175.3" rx="15.8" ry="18.1" fill="#fff" stroke="#000" stroke-width="2.9"/>
<path d="M287 175.35 H342" stroke="#000" stroke-width="2.9"/>
<path d="M276 175.35 L288 169.6 V181.1 Z" fill="#000"/>
<text x="359.3" y="183" text-anchor="middle" font-family="Liberation Mono" font-size="22.5" fill="#000">1</text>
<ellipse cx="608.5" cy="110.3" rx="15.8" ry="17.6" fill="#fff" stroke="#000" stroke-width="2.9"/>
<path d="M608.5 47 V92.5" stroke="#000" stroke-width="2.9"/>
<path d="M608.4 37.8 L602.6 49 H614.2 Z" fill="#000"/>
<text x="608.3" y="117.9" text-anchor="middle" font-family="Liberation Mono" font-size="21" fill="#000">2</text>
<path d="M1118.02 385.98 A54 54 0 0 1 1192.04 307.41 L1180.09 320.87 A36 36 0 0 0 1130.74 373.26 Z" fill="#0a78e2"/>
<path d="M1192.04 307.41 A54 54 0 0 1 1194.38 385.98 L1181.66 373.26 A36 36 0 0 0 1180.09 320.87 Z" fill="#20c997"/>
<path d="M1465.72 379.38 A54 54 0 0 1 1507.97 287.35 L1506.61 305.30 A36 36 0 0 0 1478.44 366.66 Z" fill="#e08a00"/>
<path d="M1507.97 287.35 A54 54 0 0 1 1542.08 379.38 L1529.36 366.66 A36 36 0 0 0 1506.61 305.30 Z" fill="#f2c53d"/>
<rect x="1029.5" y="522.0" width="35" height="10.5" fill="#9ec5fe" stroke="#d6d6dc" stroke-width="1"/>
<rect x="1351.5" y="522.0" width="35" height="10.5" fill="#3a86f5" stroke="#d6d6dc" stroke-width="1"/>
<rect x="1672.5" y="522.0" width="35" height="10.5" fill="#96f0d6" stroke="#d6d6dc" stroke-width="1"/>
<rect x="1098.0" y="541.7" width="35" height="10.5" fill="#30e3a8" stroke="#d6d6dc" stroke-width="1"/>
<rect x="1300.8" y="541.7" width="35" height="10.5" fill="#c6fba2" stroke="#d6d6dc" stroke-width="1"/>
<rect x="1557.5" y="541.7" width="35" height="10.5" fill="#96f94e" stroke="#d6d6dc" stroke-width="1"/>
<path d="M1062 860.40 H1893.7" stroke="#d4d4da" stroke-width="1"/>
<path d="M1062 817.69 H1893.7" stroke="#e2e2e8" stroke-width="1"/>
<path d="M1062 774.98 H1893.7" stroke="#e2e2e8" stroke-width="1"/>
<path d="M1062 732.27 H1893.7" stroke="#e2e2e8" stroke-width="1"/>
<path d="M1062 689.56 H1893.7" stroke="#e2e2e8" stroke-width="1"/>
<path d="M1062 646.85 H1893.7" stroke="#e2e2e8" stroke-width="1"/>
<path d="M1062 604.14 H1893.7" stroke="#e2e2e8" stroke-width="1"/>
<path d="M1062 561.43 H1893.7" stroke="#e2e2e8" stroke-width="1"/>
<path d="M1068.9 561.4 V866.8" stroke="#e2e2e8" stroke-width="1"/>
<path d="M1138.8 561.4 V866.8" stroke="#e2e2e8" stroke-width="1"/>
<path d="M1205.5 561.4 V866.8" stroke="#e2e2e8" stroke-width="1"/>
<path d="M1272.5 561.4 V866.8" stroke="#e2e2e8" stroke-width="1"/>
<path d="M1341.4 561.4 V866.8" stroke="#e2e2e8" stroke-width="1"/>
<path d="M1410.6 561.4 V866.8" stroke="#e2e2e8" stroke-width="1"/>
<path d="M1479.4 561.4 V866.8" stroke="#e2e2e8" stroke-width="1"/>
<path d="M1548.5 561.4 V866.8" stroke="#e2e2e8" stroke-width="1"/>
<path d="M1618.4 561.4 V866.8" stroke="#e2e2e8" stroke-width="1"/>
<path d="M1687.6 561.4 V866.8" stroke="#e2e2e8" stroke-width="1"/>
<path d="M1757.2 561.4 V866.8" stroke="#e2e2e8" stroke-width="1"/>
<path d="M1826.3 561.4 V866.8" stroke="#e2e2e8" stroke-width="1"/>
<rect x="1079.10" y="859.40" width="24.20" height="0.40" fill="#96f0d6" stroke="#d9d9de" stroke-width="1"/>
<rect x="1104.50" y="859.40" width="24.20" height="0.40" fill="#30e3a8" stroke="#d9d9de" stroke-width="1"/>
<rect x="1149.00" y="859.50" width="24.20" height="0.30" fill="#9ec5fe" stroke="#d9d9de" stroke-width="1"/>
<rect x="1149.00" y="858.50" width="24.20" height="0.30" fill="#96f0d6" stroke="#d9d9de" stroke-width="1"/>
<rect x="1174.40" y="859.50" width="24.20" height="0.30" fill="#3a86f5" stroke="#d9d9de" stroke-width="1"/>
<rect x="1174.40" y="858.50" width="24.20" height="0.30" fill="#30e3a8" stroke="#d9d9de" stroke-width="1"/>
<rect x="1212.90" y="856.30" width="24.20" height="3.50" fill="#9ec5fe" stroke="#d9d9de" stroke-width="1"/>
<rect x="1212.90" y="853.60" width="24.20" height="1.70" fill="#96f0d6" stroke="#d9d9de" stroke-width="1"/>
<rect x="1238.30" y="856.30" width="24.20" height="3.50" fill="#3a86f5" stroke="#d9d9de" stroke-width="1"/>
<rect x="1238.30" y="853.60" width="24.20" height="1.70" fill="#30e3a8" stroke="#d9d9de" stroke-width="1"/>
<rect x="1282.80" y="856.60" width="24.20" height="3.20" fill="#9ec5fe" stroke="#d9d9de" stroke-width="1"/>
<rect x="1282.80" y="852.60" width="24.20" height="3.00" fill="#96f0d6" stroke="#d9d9de" stroke-width="1"/>
<rect x="1308.20" y="856.60" width="24.20" height="3.20" fill="#3a86f5" stroke="#d9d9de" stroke-width="1"/>
<rect x="1308.20" y="853.60" width="24.20" height="2.00" fill="#30e3a8" stroke="#d9d9de" stroke-width="1"/>
<rect x="1350.90" y="859.50" width="24.20" height="0.30" fill="#9ec5fe" stroke="#d9d9de" stroke-width="1"/>
<rect x="1350.90" y="856.10" width="24.20" height="2.40" fill="#96f0d6" stroke="#d9d9de" stroke-width="1"/>
<rect x="1350.90" y="811.90" width="24.20" height="43.20" fill="#c6fba2" stroke="#d9d9de" stroke-width="1"/>
<rect x="1376.30" y="859.50" width="24.20" height="0.30" fill="#3a86f5" stroke="#d9d9de" stroke-width="1"/>
<rect x="1376.30" y="856.50" width="24.20" height="2.00" fill="#30e3a8" stroke="#d9d9de" stroke-width="1"/>
<rect x="1376.30" y="811.90" width="24.20" height="43.60" fill="#96f94e" stroke="#d9d9de" stroke-width="1"/>
<rect x="1421.20" y="845.30" width="24.20" height="14.50" fill="#9ec5fe" stroke="#d9d9de" stroke-width="1"/>
<rect x="1421.20" y="839.50" width="24.20" height="4.80" fill="#96f0d6" stroke="#d9d9de" stroke-width="1"/>
<rect x="1421.20" y="800.90" width="24.20" height="37.60" fill="#c6fba2" stroke="#d9d9de" stroke-width="1"/>
<rect x="1446.60" y="847.00" width="24.20" height="12.80" fill="#3a86f5" stroke="#d9d9de" stroke-width="1"/>
<rect x="1446.60" y="841.00" width="24.20" height="5.00" fill="#30e3a8" stroke="#d9d9de" stroke-width="1"/>
<rect x="1446.60" y="802.10" width="24.20" height="37.90" fill="#96f94e" stroke="#d9d9de" stroke-width="1"/>
<rect x="1489.00" y="825.60" width="24.20" height="34.20" fill="#9ec5fe" stroke="#d9d9de" stroke-width="1"/>
<rect x="1489.00" y="816.70" width="24.20" height="7.90" fill="#96f0d6" stroke="#d9d9de" stroke-width="1"/>
<rect x="1489.00" y="781.50" width="24.20" height="34.20" fill="#c6fba2" stroke="#d9d9de" stroke-width="1"/>
<rect x="1514.40" y="830.90" width="24.20" height="28.90" fill="#3a86f5" stroke="#d9d9de" stroke-width="1"/>
<rect x="1514.40" y="823.10" width="24.20" height="6.80" fill="#30e3a8" stroke="#d9d9de" stroke-width="1"/>
<rect x="1514.40" y="787.60" width="24.20" height="34.50" fill="#96f94e" stroke="#d9d9de" stroke-width="1"/>
<rect x="1559.50" y="828.40" width="24.20" height="31.40" fill="#9ec5fe" stroke="#d9d9de" stroke-width="1"/>
<rect x="1559.50" y="822.30" width="24.20" height="5.10" fill="#96f0d6" stroke="#d9d9de" stroke-width="1"/>
<rect x="1559.50" y="618.20" width="24.20" height="203.10" fill="#c6fba2" stroke="#d9d9de" stroke-width="1"/>
<rect x="1584.90" y="839.10" width="24.20" height="20.70" fill="#3a86f5" stroke="#d9d9de" stroke-width="1"/>
<rect x="1584.90" y="834.50" width="24.20" height="3.60" fill="#30e3a8" stroke="#d9d9de" stroke-width="1"/>
<rect x="1584.90" y="631.10" width="24.20" height="202.40" fill="#96f94e" stroke="#d9d9de" stroke-width="1"/>
<rect x="1629.40" y="845.00" width="24.20" height="14.80" fill="#9ec5fe" stroke="#d9d9de" stroke-width="1"/>
<rect x="1629.40" y="842.80" width="24.20" height="1.20" fill="#96f0d6" stroke="#d9d9de" stroke-width="1"/>
<rect x="1629.40" y="750.40" width="24.20" height="91.40" fill="#c6fba2" stroke="#d9d9de" stroke-width="1"/>
<rect x="1654.80" y="858.00" width="24.20" height="1.80" fill="#3a86f5" stroke="#d9d9de" stroke-width="1"/>
<rect x="1654.80" y="844.00" width="24.20" height="13.00" fill="#96f94e" stroke="#d9d9de" stroke-width="1"/>
<rect x="1697.30" y="852.00" width="24.20" height="7.80" fill="#9ec5fe" stroke="#d9d9de" stroke-width="1"/>
<rect x="1697.30" y="582.90" width="24.20" height="268.10" fill="#c6fba2" stroke="#d9d9de" stroke-width="1"/>
<rect x="1767.50" y="835.70" width="24.20" height="24.10" fill="#c6fba2" stroke="#d9d9de" stroke-width="1"/>
<rect x="1835.00" y="859.30" width="24.20" height="0.50" fill="#9ec5fe" stroke="#d9d9de" stroke-width="1"/>
</svg>
<div class="t" style="left:46.8px;top:55.6px;font-size:12.5px;font-weight:bold;letter-spacing:0.12px;color:#111">Структура проектов предприятия</div>
<div class="t" style="left:729.9px;top:54px;font-size:14px;color:#707076">Поиск</div>
<div class="a" style="left:0;top:913px;width:1917px;height:2px;background:#fff"></div>
</body></html>
